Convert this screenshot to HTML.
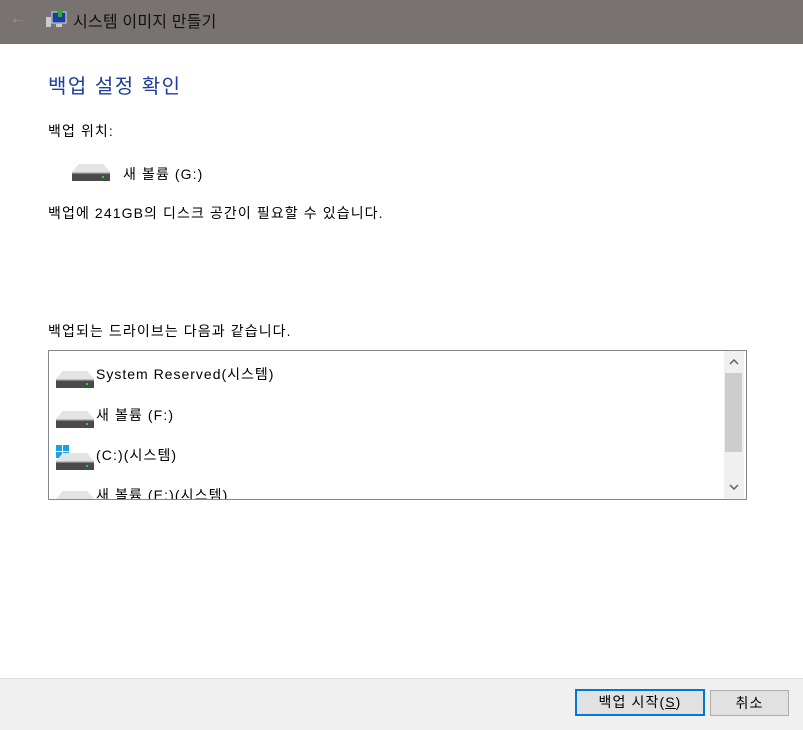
<!DOCTYPE html>
<html><head><meta charset="utf-8"><style>
body{margin:0;width:803px;height:729px;position:relative;background:#fff;font-family:"Liberation Sans","Noto Sans CJK KR",sans-serif;font-size:14px;color:#000;overflow:hidden;letter-spacing:1.1px}
.a{position:absolute;white-space:nowrap}
.title{position:absolute;left:0;top:0;width:803px;height:44px;background:#787371}
.foot{position:absolute;left:0;top:678px;width:803px;height:51px;background:#f0f0f0;border-top:1px solid #dfdfdf}
.btn{position:absolute;height:24px;background:#e1e1e1;border:1px solid #adadad;text-align:center;line-height:24px;font-size:14px}
</style></head><body>
<svg width="0" height="0" style="position:absolute"><defs>
<g id="drv"><path d="M7 0 H31 L38 8 V17 H0 V8 Z" fill="#d0d0d0"/><path d="M7 0 H31 L38 8 H0 Z" fill="#e4e4e4"/><rect x="0" y="9" width="38" height="8" fill="#4a4a4a"/><rect x="0" y="8" width="38" height="1.5" fill="#bdbdbd"/><rect x="30" y="12" width="2" height="2" fill="#3c3"/></g>
</defs></svg>
<div class="title">
<div class="a" style="left:10px;top:10px;color:#9a9592;font-size:16px">←</div>
<svg class="a" style="left:46px;top:9px" width="22" height="20"><rect x="6" y="3" width="14" height="11" fill="#1c3ea0" stroke="#ddd"/><rect x="0" y="8" width="5" height="10" fill="#ccc"/><rect x="10" y="15" width="6" height="3" fill="#ccc"/><path d="M14 0 L18 4 H16 V8 H12 V4 H10Z" fill="#3a3"/></svg>
<div class="a" style="left:73px;top:8px;font-size:16px;color:#111;letter-spacing:0.2px">시스템 이미지 만들기</div>
</div>
<div class="a" style="left:48px;top:70px;font-size:20px;color:#1a3d9e;letter-spacing:1.5px">백업 설정 확인</div>
<div class="a" style="left:48px;top:121px">백업 위치:</div>
<svg class="a" style="left:72px;top:164px" width="40" height="18"><use href="#drv"/></svg>
<div class="a" style="left:123px;top:164px">새 볼륨 (G:)</div>
<div class="a" style="left:48px;top:203px">백업에 241GB의 디스크 공간이 필요할 수 있습니다.</div>
<div class="a" style="left:48px;top:321px">백업되는 드라이브는 다음과 같습니다.</div>
<div class="a" style="left:48px;top:350px;width:697px;height:148px;border:1px solid #828790;overflow:hidden">
<svg class="a" style="left:7px;top:20px" width="40" height="18"><use href="#drv"/></svg>
<div class="a" style="left:47px;top:13px;letter-spacing:1px">System Reserved(시스템)</div>
<svg class="a" style="left:7px;top:60px" width="40" height="18"><use href="#drv"/></svg>
<div class="a" style="left:47px;top:54px">새 볼륨 (F:)</div>
<svg class="a" style="left:7px;top:94px" width="40" height="26"><rect x="0" y="0" width="6" height="6" fill="#1ba1e2"/><rect x="7" y="0" width="6" height="6" fill="#1ba1e2"/><rect x="0" y="7" width="6" height="6" fill="#1ba1e2"/><rect x="7" y="7" width="6" height="6" fill="#1ba1e2"/><g transform="translate(0,8)"><use href="#drv"/></g></svg>
<div class="a" style="left:47px;top:94px">(C:)(시스템)</div>
<svg class="a" style="left:7px;top:140px" width="40" height="18"><use href="#drv"/></svg>
<div class="a" style="left:47px;top:134px">새 볼륨 (E:)(시스템)</div>
<div class="a" style="left:675px;top:0;width:20px;height:148px;background:#f0f0f0">
<div class="a" style="left:1px;top:22px;width:17px;height:79px;background:#cdcdcd"></div>
<svg class="a" style="left:5px;top:8px" width="10" height="6"><path d="M1 5 L5 1 L9 5" stroke="#606060" stroke-width="1.5" fill="none"/></svg>
<svg class="a" style="left:5px;top:133px" width="10" height="6"><path d="M1 1 L5 5 L9 1" stroke="#606060" stroke-width="1.5" fill="none"/></svg>
</div>
</div>
<div class="foot"></div>
<div class="btn" style="left:575px;top:689px;width:126px;border:2px solid #0078d7;height:23px;line-height:23px">백업 시작(<u>S</u>)</div>
<div class="btn" style="left:710px;top:690px;width:77px">취소</div>
</body></html>
